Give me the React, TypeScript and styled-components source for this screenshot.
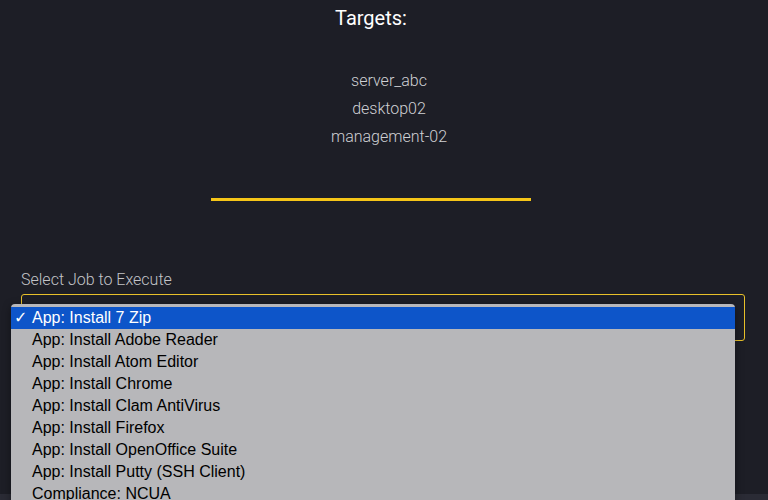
import React from "react";
import styled, { createGlobalStyle } from "styled-components";

const Global = createGlobalStyle`
  html, body { margin: 0; padding: 0; background: #1d1e26; }
  body { font-family: Roboto, "Noto Sans", sans-serif; overflow: hidden; }
`;

const Page = styled.div`
  width: 768px;
  height: 500px;
  display: flex;
  flex-direction: column;
  background: #1d1e26;
  position: relative;
  overflow: hidden;
`;

const Main = styled.div`
  flex: 1;
  display: flex;
  flex-direction: column;
  align-items: center;
  padding-right: 26px;
`;

const Title = styled.h2`
  margin: 5px 0 0;
  font-size: 20px;
  font-weight: 400;
  color: #ffffff;
  line-height: 26px;
`;

const TargetList = styled.ul`
  list-style: none;
  margin: 36px 0 0;
  padding: 0 0 0 36px;
  display: flex;
  flex-direction: column;
  align-items: center;
`;

const Target = styled.li`
  font-size: 16px;
  font-weight: 300;
  color: #cfd0d4;
  line-height: 28px;
`;

const Divider = styled.div`
  width: 320px;
  height: 3px;
  background: #f5c518;
  margin-top: 47px;
`;

const Field = styled.div`
  align-self: stretch;
  margin: 69px -3px 0 21px;
  display: flex;
  flex-direction: column;
  gap: 4px;
`;

const Label = styled.label`
  font-size: 16px;
  font-weight: 300;
  color: #c3c4c8;
  line-height: 20px;
`;

const SelectBox = styled.div`
  height: 45px;
  border: 1px solid #e8c02a;
  border-radius: 3px;
`;

const Footer = styled.div`
  height: 6px;
  background: #2a2b35;
`;

const Menu = styled.ul`
  position: absolute;
  left: 11px;
  top: 304px;
  width: 724px;
  margin: 0;
  padding: 3px 0 0;
  list-style: none;
  background: #b7b7ba;
  border-radius: 4px 4px 0 0;
  box-shadow: 0 2px 8px rgba(0, 0, 0, 0.4);
  font-family: "Liberation Sans", Arial, sans-serif;
`;

const Option = styled.li<{ $active?: boolean }>`
  height: 22px;
  line-height: 22px;
  font-size: 16px;
  color: ${(p) => (p.$active ? "#ffffff" : "#000000")};
  background: ${(p) => (p.$active ? "#0d55c9" : "transparent")};
  display: flex;
  white-space: nowrap;
`;

const Check = styled.span`
  width: 21px;
  padding-left: 3px;
  box-sizing: border-box;
  font-family: "DejaVu Sans", sans-serif;
  font-size: 16px;
`;

const options = [
  "App: Install 7 Zip",
  "App: Install Adobe Reader",
  "App: Install Atom Editor",
  "App: Install Chrome",
  "App: Install Clam AntiVirus",
  "App: Install Firefox",
  "App: Install OpenOffice Suite",
  "App: Install Putty (SSH Client)",
  "Compliance: NCUA",
];

export default function App() {
  return (
    <Page>
      <Global />
      <Main>
        <Title>Targets:</Title>
        <TargetList>
          <Target>server_abc</Target>
          <Target>desktop02</Target>
          <Target>management-02</Target>
        </TargetList>
        <Divider />
        <Field>
          <Label>Select Job to Execute</Label>
          <SelectBox />
        </Field>
      </Main>
      <Footer />
      <Menu>
        {options.map((o, i) => (
          <Option key={o} $active={i === 0}>
            <Check>{i === 0 ? "✓" : ""}</Check>
            {o}
          </Option>
        ))}
      </Menu>
    </Page>
  );
}
